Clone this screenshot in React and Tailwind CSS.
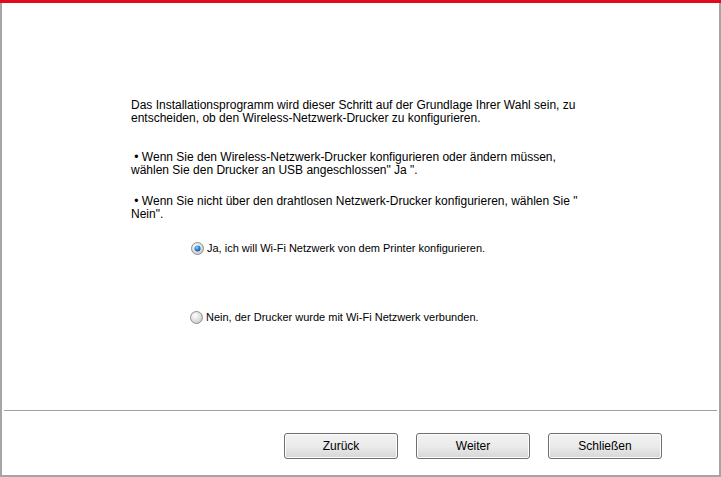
import React from "react";

function Radio({ checked }) {
  return (
    <svg width="13" height="13" viewBox="0 0 13 13" className="shrink-0">
      <defs>
        <radialGradient id={checked ? "rg1" : "rg2"} cx="40%" cy="35%" r="70%">
          <stop offset="0%" stopColor="#ffffff" />
          <stop offset="100%" stopColor="#c8c8c8" />
        </radialGradient>
        <radialGradient id="dot" cx="40%" cy="35%" r="70%">
          <stop offset="0%" stopColor="#8fd3ff" />
          <stop offset="60%" stopColor="#1f7fd0" />
          <stop offset="100%" stopColor="#0d4f91" />
        </radialGradient>
      </defs>
      <circle cx="6.5" cy="6.5" r="6" fill={`url(#${checked ? "rg1" : "rg2"})`} stroke="#8e8f8f" strokeWidth="1" />
      {checked && <circle cx="6.5" cy="6.5" r="3" fill="url(#dot)" />}
    </svg>
  );
}

function Btn({ children }) {
  return (
    <button className="w-[114px] h-[26px] rounded-[3px] border border-[#707070] bg-gradient-to-b from-[#f2f2f2] via-[#ebebeb] to-[#d6d6d6] text-[12px] text-black shadow-[inset_0_0_0_1px_#fcfcfc]">
      {children}
    </button>
  );
}

export default function App() {
  return (
    <div
      className="w-[721px] h-[477px] bg-white flex flex-col border-l-2 border-r-2 border-b-2 border-[#a5a5a5] text-black text-[12px] leading-[13px]"
      style={{ fontFamily: "Tahoma, 'Liberation Sans', Arial, sans-serif" }}
    >
      <div className="h-[3px] bg-[#e30a1f] -mx-[2px]" />
      <div className="flex-1 flex flex-col pl-[129px] pt-[96px]">
        <p>Das Installationsprogramm wird dieser Schritt auf der Grundlage Ihrer Wahl sein, zu<br />entscheiden, ob den Wireless-Netzwerk-Drucker zu konfigurieren.</p>
        <p className="mt-[26px]">&nbsp;• Wenn Sie den Wireless-Netzwerk-Drucker konfigurieren oder ändern müssen,<br />wählen Sie den Drucker an USB angeschlossen" Ja ".</p>
        <p className="mt-[18px]">&nbsp;• Wenn Sie nicht über den drahtlosen Netzwerk-Drucker konfigurieren, wählen Sie "<br />Nein".</p>
        <label className="flex items-center gap-[3px] ml-[60px] mt-[21px] text-[11px]">
          <Radio checked />
          <span>Ja, ich will Wi-Fi Netzwerk von dem Printer konfigurieren.</span>
        </label>
        <label className="flex items-center gap-[3px] ml-[59px] mt-[56px] text-[11px]">
          <Radio />
          <span>Nein, der Drucker wurde mit Wi-Fi Netzwerk verbunden.</span>
        </label>
      </div>
      <div className="h-px bg-[#a0a0a0] mx-[2px]" />
      <div className="h-[64px] flex items-start justify-end gap-[18px] pt-[22px] pr-[57px]">
        <Btn>Zurück</Btn>
        <Btn>Weiter</Btn>
        <Btn>Schließen</Btn>
      </div>
    </div>
  );
}
